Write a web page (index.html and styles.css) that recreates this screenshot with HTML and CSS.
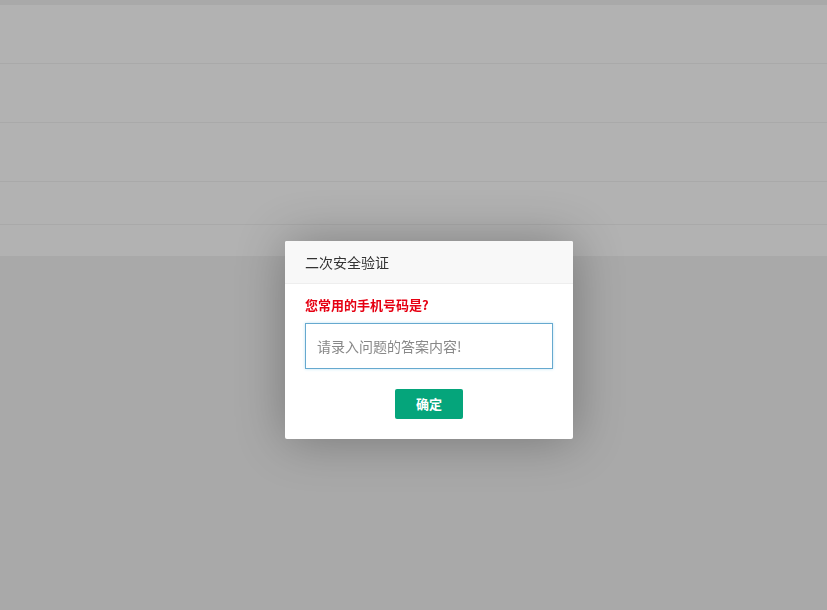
FILE: index.html
```html
<!DOCTYPE html>
<html lang="zh-CN">
<head>
  <meta charset="UTF-8">
  <meta name="viewport" content="width=device-width, initial-scale=1.0">
  <title>二次安全验证</title>
  <link rel="stylesheet" href="styles.css">
</head>
<body>
  <!-- page behind the modal -->
  <div class="page">
    <div class="row row-tall"></div>
    <div class="row row-tall"></div>
    <div class="row row-tall"></div>
    <div class="row row-mid"></div>
    <div class="row row-low"></div>
  </div>

  <div class="shade"></div>

  <!-- Security question dialog -->
  <div class="layer">
    <div class="layer-title">二次安全验证</div>
    <div class="layer-content">
      <p class="question">您常用的手机号码是?</p>
      <input type="text" class="answer" placeholder="请录入问题的答案内容!">
      <div class="actions">
        <button class="btn-ok">确定</button>
      </div>
    </div>
  </div>
</body>
</html>
```

FILE: styles.css
```css
body {
  margin: 0;
  background: #f2f2f2;
  font-family: "Noto Sans CJK SC", "Noto Sans", sans-serif;
  height: 610px;
  overflow: hidden;
}
.page {
  padding-top: 5px;
}
.row {
  background: #fff;
  border-bottom: 1px solid #f3f3f3;
}
.row-tall {
  height: 58px;
}
.row-mid {
  height: 42px;
}
.row-low {
  height: 31px;
  border-bottom: none;
}
.shade {
  position: fixed;
  top: 0;
  left: 0;
  width: 100%;
  height: 100%;
  background: rgba(0, 0, 0, 0.3);
}
.layer {
  position: absolute;
  top: 241px;
  left: 285px;
  width: 288px;
  background: #fff;
  border-radius: 2px;
  box-shadow: 1px 1px 50px rgba(0, 0, 0, 0.3);
}
.layer-title {
  height: 42px;
  line-height: 42px;
  padding: 0 20px;
  background: #f8f8f8;
  border-bottom: 1px solid #eee;
  border-radius: 2px 2px 0 0;
  font-size: 14px;
  color: #333;
}
.layer-content {
  padding: 12px 20px 20px;
}
.question {
  margin: 0 0 9px;
  font-size: 13px;
  font-weight: bold;
  color: #e60012;
  line-height: 18px;
}
.answer {
  display: block;
  box-sizing: border-box;
  width: 100%;
  height: 46px;
  padding: 0 11px;
  border: 1px solid #66a9cf;
  box-shadow: 0 0 3px #bfe3f3;
  outline: none;
  font-family: inherit;
  font-size: 14px;
  color: #333;
}
.answer::placeholder {
  color: #888;
}
.actions {
  margin-top: 20px;
  text-align: center;
}
.btn-ok {
  width: 68px;
  height: 30px;
  padding-bottom: 2px;
  border: none;
  border-radius: 2px;
  background: #05a57b;
  color: #fff;
  font-family: inherit;
  font-size: 13px;
  font-weight: bold;
  cursor: pointer;
}
```
